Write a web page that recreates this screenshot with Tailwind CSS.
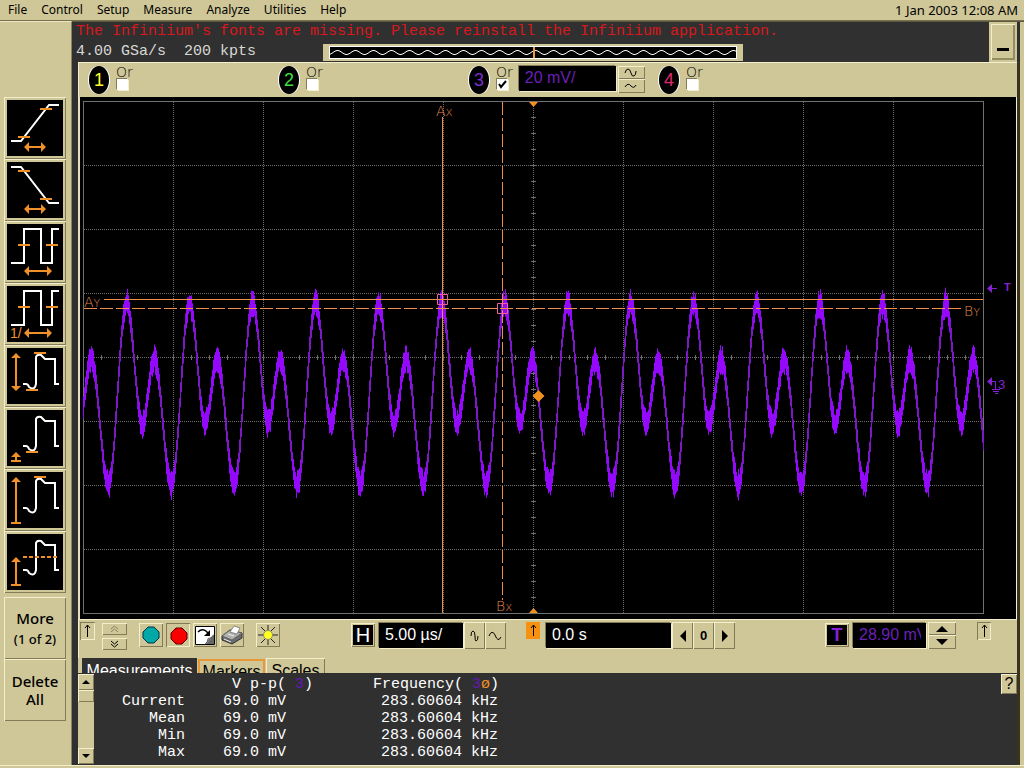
<!DOCTYPE html>
<html lang="en">
<head>
<meta charset="utf-8">
<title>Infiniium</title>
<script src="https://cdn.jsdelivr.net/npm/@tailwindcss/browser@4"></script>
</head>
<body class="min-h-screen flex flex-col bg-[#cfc798] font-['Liberation_Sans',sans-serif] text-black">
<svg class="hidden" aria-hidden="true">
  <defs>
    <g id="ar-h-short" fill="#f09028"><path d="M17 47l5-5v10zM39 47l-5-5v10zM22 46h12v2H22z"/></g>
    <g id="ar-h-long" fill="#f09028"><path d="M17 47l5-5v10zM45 47l-5-5v10zM22 46h18v2H22z"/></g>
    <g id="square-wave" fill="none" stroke-width="2"><path stroke="#fff" d="M4 39h13V5h17v34h11V5h7"/><path stroke="#f09028" d="M11 21h12M39 21h12"/></g>
    <path id="pulse" fill="none" stroke="#fff" stroke-width="2" d="M16 36h3q2 0 3 3q4 3 6 0l1-3V9q1-3 5-2l4 4h10v25h4"/>
  </defs>
</svg>

<nav class="h-[21px] shrink-0 flex items-center pl-2 pr-1.5 gap-[14px] text-[12px] leading-5 font-['Noto_Sans',sans-serif] border-b border-[#77714f]" aria-label="Main menu">
  <button>File</button><button>Control</button><button>Setup</button><button>Measure</button><button>Analyze</button><button>Utilities</button><button>Help</button>
  <time class="ml-auto text-[13px]">1 Jan 2003 12:08 AM</time>
</nav>

<div class="flex-1 flex">
  <aside class="w-[72px] shrink-0 pt-[75px] pl-1 border-t border-r border-t-[#eee8c0] border-r-[#8a8360] flex flex-col items-start">
    <button aria-label="Rise time" class="w-[62px] h-[62px] p-[3px] shadow-[inset_1px_1px_0_#f3eecb,inset_-1px_-1px_0_#827b56]"><svg viewBox="0 0 56 56" class="bg-black w-full"><path fill="none" stroke="#fff" stroke-width="2" d="M4 41h10L42 5h10"/><path stroke="#f09028" stroke-width="2" d="M11 37h12M33 9h12"/><use href="#ar-h-short"/></svg></button>
    <button aria-label="Fall time" class="w-[62px] h-[62px] p-[3px] shadow-[inset_1px_1px_0_#f3eecb,inset_-1px_-1px_0_#827b56]"><svg viewBox="0 0 56 56" class="bg-black w-full"><path fill="none" stroke="#fff" stroke-width="2" d="M4 5h10L42 41h10"/><path stroke="#f09028" stroke-width="2" d="M11 9h12M33 37h12"/><use href="#ar-h-short"/></svg></button>
    <button aria-label="Period" class="w-[62px] h-[62px] p-[3px] shadow-[inset_1px_1px_0_#f3eecb,inset_-1px_-1px_0_#827b56]"><svg viewBox="0 0 56 56" class="bg-black w-full"><use href="#square-wave"/><use href="#ar-h-long"/></svg></button>
    <button aria-label="Frequency" class="w-[62px] h-[62px] p-[3px] shadow-[inset_1px_1px_0_#f3eecb,inset_-1px_-1px_0_#827b56]"><svg viewBox="0 0 56 56" class="bg-black w-full"><use href="#square-wave"/><use href="#ar-h-long"/><text x="3" y="52" font-size="14" fill="#f09028">1/</text></svg></button>
    <button aria-label="V peak-peak" class="w-[62px] h-[62px] p-[3px] shadow-[inset_1px_1px_0_#f3eecb,inset_-1px_-1px_0_#827b56]"><svg viewBox="0 0 56 56" class="bg-black w-full"><use href="#pulse"/><path fill="#f09028" d="M27 4h12v2H27zM19 41h12v2H19zM9 5l5 5H4zM9 43l5-5H4zM8 10h2v28H8z"/></svg></button>
    <button aria-label="V min" class="w-[62px] h-[62px] p-[3px] shadow-[inset_1px_1px_0_#f3eecb,inset_-1px_-1px_0_#827b56]"><svg viewBox="0 0 56 56" class="bg-black w-full"><use href="#pulse"/><path fill="#f09028" d="M19 41h12v2H19zM9 42l5 5H4zM8 47h2v3H8zM4 50h10v2H4z"/></svg></button>
    <button aria-label="V max" class="w-[62px] h-[62px] p-[3px] shadow-[inset_1px_1px_0_#f3eecb,inset_-1px_-1px_0_#827b56]"><svg viewBox="0 0 56 56" class="bg-black w-full"><use href="#pulse"/><path fill="#f09028" d="M27 4h12v2H27zM9 5l5 5H4zM8 10h2v40H8zM4 50h10v2H4z"/></svg></button>
    <button aria-label="V average" class="w-[62px] h-[62px] p-[3px] shadow-[inset_1px_1px_0_#f3eecb,inset_-1px_-1px_0_#827b56]"><svg viewBox="0 0 56 56" class="bg-black w-full"><use href="#pulse"/><path fill="#f09028" d="M9 23l5 5H4zM8 28h2v22H8zM4 50h10v2H4z"/><path stroke="#f09028" stroke-width="2" stroke-dasharray="4 2" d="M16 23h35"/></svg></button>
    <button class="mt-1 w-[62px] h-[62px] text-[15px] leading-5 font-medium font-['Noto_Sans',sans-serif] shadow-[inset_1px_1px_0_#f3eecb,inset_-1px_-1px_0_#827b56]">More<br><span class="text-[13px]">(1 of 2)</span></button>
    <button class="w-[62px] h-[62px] text-[15px] leading-[18px] font-medium font-['Noto_Sans',sans-serif] shadow-[inset_1px_1px_0_#f3eecb,inset_-1px_-1px_0_#827b56]">Delete<br>All</button>
  </aside>

  <main class="flex-1 min-w-0 pl-1 flex flex-col bg-[#303030] border-t border-t-[#5e5a42]">
    <header class="h-[40px] shrink-0 flex">
      <div class="flex-1 min-w-0 font-['Liberation_Mono',monospace] text-[15px]">
        <p class="h-[22px] leading-[20px] whitespace-pre text-[#d8181c]">The Infiniium's fonts are missing. Please reinstall the Infiniium application.</p>
        <div class="flex text-[#d8d8d4]">
          <p class="w-[247px] leading-[15px] whitespace-pre">4.00 GSa/s  200 kpts</p>
          <div class="w-[420px] h-[17px] bg-[#cfc798] px-1.5 py-0.5">
            <svg class="w-full h-[13px] bg-black outline-1 -outline-offset-1 outline-white" viewBox="0 0 408 13" aria-label="Memory bar"><path id="memwave" fill="none" stroke="#fff"/><path stroke="#f09838" stroke-width="2" d="M205 0v13"/></svg>
          </div>
        </div>
      </div>
      <div class="w-[28px] mr-[3px] bg-[#cfc798] p-0.5"><button aria-label="Minimize" class="w-full h-full flex items-end justify-center pb-[9px] shadow-[inset_1px_1px_0_#f3eecb,inset_-2px_-2px_0_#948d62]"><span class="w-3 h-[3px] bg-black"></span></button></div>
      <div class="w-1 bg-[#cfc798]"></div>
    </header>

    <div class="flex-1 flex flex-col ml-0.5 border-r-4 border-[#cfc798]">
      <div class="flex-1 flex flex-col border-r-[3px] border-[#38321e]">
        <section aria-label="Channels" class="h-[35px] shrink-0 bg-[#cfc798] border-t border-t-[#f3eecb] border-l border-l-[#f3eecb] pl-[10px] flex items-start pt-[3px]">
          <div class="w-[190px] flex items-start">
            <button class="w-[20px] h-[28px] rounded-[50%] bg-black text-[#ffff30] text-[18px] leading-7 shadow-[-1px_0_0_#fff,1px_0_0_#fff]">1</button>
            <label class="ml-[7px] flex flex-col text-[14px] leading-[13px] font-['DejaVu_Sans',sans-serif] font-extralight">Or<input type="checkbox" class="appearance-none w-[11px] h-[11px] bg-white shadow-[-1px_-1px_0_#827b56,1px_1px_0_#f3eecb] ml-px"></label>
          </div>
          <div class="w-[190px] flex items-start">
            <button class="w-[20px] h-[28px] rounded-[50%] bg-black text-[#40e040] text-[18px] leading-7 shadow-[-1px_0_0_#fff,1px_0_0_#fff]">2</button>
            <label class="ml-[7px] flex flex-col text-[14px] leading-[13px] font-['DejaVu_Sans',sans-serif] font-extralight">Or<input type="checkbox" class="appearance-none w-[11px] h-[11px] bg-white shadow-[-1px_-1px_0_#827b56,1px_1px_0_#f3eecb] ml-px"></label>
          </div>
          <div class="w-[190px] flex items-start">
            <button class="w-[20px] h-[28px] rounded-[50%] bg-black text-[#7a2cd0] text-[18px] leading-7 shadow-[-1px_0_0_#fff,1px_0_0_#fff]">3</button>
            <label class="ml-[7px] flex flex-col text-[14px] leading-[13px] font-['DejaVu_Sans',sans-serif] font-extralight">Or<span class="relative ml-px h-[11px] w-[11px]"><input type="checkbox" checked class="block appearance-none w-[11px] h-[11px] bg-white shadow-[-1px_-1px_0_#827b56,1px_1px_0_#f3eecb]"><svg class="absolute inset-0 pointer-events-none" viewBox="0 0 11 11"><path d="M2 5l2 3 5-6" fill="none" stroke="#000" stroke-width="2"/></svg></span></label>
            <input aria-label="Channel 3 scale" value="20 mV/" class="ml-[6px] w-[97px] h-[25px] px-1.5 pb-0.5 bg-black text-[16px] text-[#6a20b8] shadow-[-1px_-1px_0_#827b56,1px_1px_0_#f3eecb]">
            <div class="ml-0.5 w-[27px] shrink-0 flex flex-col">
              <button aria-label="Increase scale" class="h-[13px] flex justify-center shadow-[inset_1px_1px_0_#f3eecb,inset_-1px_-1px_0_#827b56]"><svg width="16" height="13"><path d="M2 7q1-4 3-4q2 0 3 4t3 3q2-1 2-5" fill="none" stroke="#000"/></svg></button>
              <button aria-label="Decrease scale" class="h-[14px] flex justify-center shadow-[inset_1px_1px_0_#f3eecb,inset_-1px_-1px_0_#827b56]"><svg width="16" height="13"><path d="M2 8q3-5 6-1q3 3 5-1" fill="none" stroke="#000"/></svg></button>
            </div>
          </div>
          <div class="flex items-start">
            <button class="w-[20px] h-[28px] rounded-[50%] bg-black text-[#e02870] text-[18px] leading-7 shadow-[-1px_0_0_#fff,1px_0_0_#fff]">4</button>
            <label class="ml-[7px] flex flex-col text-[14px] leading-[13px] font-['DejaVu_Sans',sans-serif] font-extralight">Or<input type="checkbox" class="appearance-none w-[11px] h-[11px] bg-white shadow-[-1px_-1px_0_#827b56,1px_1px_0_#f3eecb] ml-px"></label>
          </div>
        </section>

        <div class="border-l-2 border-l-[#e6e0c0] border-r border-r-[#f3eecb]">
        <svg class="block w-full bg-black" viewBox="80 97 936 522" role="img" aria-label="Waveform display">
          <g id="grid" fill="none" stroke="#6c6c68"></g>
          <rect x="83.5" y="101.5" width="900" height="512" fill="none" stroke="#70706c"/>
          <path id="trace-edges" fill="none" stroke="#7c18c4" stroke-width="1"/>
          <path id="trace" fill="none" stroke="#9408fc" stroke-width="1"/>
          <g fill="none" stroke="#ee8e48">
            <path d="M104 299.5H983"/>
            <path d="M84 308.5H962" stroke-dasharray="13 3"/>
            <path d="M442.5 117V613"/>
            <path d="M502.5 102V600" stroke-dasharray="13 3"/>
          </g>
          <g fill="none" stroke="#f060a0"><path d="M437.5 294.5h10v10h-10zM497.5 303.5h10v10h-10z"/></g>
          <path fill="#f09020" d="M529 102h9l-4.500 5zM529 613h9l-4.500-5zM538.500 390l6 6-6 6-6-6z"/>
          <g fill="#e08848" font-family="DejaVu Sans" font-weight="200" font-size="14">
            <text x="436" y="116">A<tspan font-size="12">x</tspan></text>
            <text x="496" y="611">B<tspan font-size="12">x</tspan></text>
            <text x="84" y="307">A<tspan font-size="11">Y</tspan></text>
            <text x="964" y="316">B<tspan font-size="11">Y</tspan></text>
          </g>
          <g fill="#8420d0" font-size="13">
            <path d="M987 288.500l5-4.500v9zM992 288h5v1h-5zM987 381.500l5-4.500v9zM992 381h4v8h-1v-7h-3z"/>
            <path d="M992 389.500h8M993 391.500h6M995 393.500h3" stroke="#8420d0"/>
            <text x="1004" y="291" font-size="11" font-weight="bold">T</text><text x="998" y="389">3</text>
          </g>
        </svg>
        </div>

        <section aria-label="Horizontal and trigger controls" class="h-[39px] shrink-0 bg-[#cfc798] border-t border-t-[#f3eecb] border-l border-l-[#f3eecb] pl-px flex items-start pt-0.5">
          <button aria-label="Trigger position left" class="w-[15px] h-[18px] shadow-[inset_1px_1px_0_#827b56,inset_-1px_-1px_0_#f3eecb]"><svg width="15" height="18"><path d="M7.500 3v12M5 6l2.500-3L10 6" fill="none" stroke="#000"/></svg></button>
          <div class="ml-[7px] w-[25px] flex flex-col gap-[3px] pt-px">
            <button aria-label="Move up" class="h-3 flex justify-center shadow-[inset_1px_1px_0_#f3eecb,inset_-1px_-1px_0_#827b56]"><svg width="9" height="12"><path d="M1 6l3.500-3L8 6M1 9l3.500-3L8 9" fill="none" stroke="#8a8360"/></svg></button>
            <button aria-label="Move down" class="h-3 flex justify-center shadow-[inset_1px_1px_0_#f3eecb,inset_-1px_-1px_0_#827b56]"><svg width="9" height="12"><path d="M1 3l3.500 3L8 3M1 6l3.500 3L8 6" fill="none" stroke="#000"/></svg></button>
          </div>
          <div class="ml-3 mt-px flex gap-[3px]">
            <button aria-label="Run" class="w-6 h-6 shadow-[inset_1px_1px_0_#f3eecb,inset_-1px_-1px_0_#827b56]"><svg viewBox="0 0 24 24"><path d="M9 4h6l5 5v6l-5 5H9l-5-5V9z" fill="#00a8a8" stroke="#034"/></svg></button>
            <button aria-label="Stop" class="w-6 h-6 shadow-[inset_1px_1px_0_#827b56,inset_-1px_-1px_0_#f3eecb]"><svg viewBox="0 0 24 24"><path d="M10 5h6l5 5v6l-5 5h-6l-5-5v-6z" fill="#f80000" stroke="#500"/></svg></button>
            <button aria-label="Clear display" class="w-6 h-6 shadow-[inset_1px_1px_0_#f3eecb,inset_-1px_-1px_0_#827b56]"><svg viewBox="0 0 24 24"><path d="M2.500 3.500h19v18h-19z" fill="#fff" stroke="#000"/><path d="M21 12v9h-8z" fill="#666"/><path d="M12 21.500q3-3 3-6q4 0 6-4z" fill="#999" stroke="#444" stroke-width=".7"/><path d="M5 9q5-5 10 1" fill="none" stroke="#000" stroke-width="1.500"/><path d="M17 7v6h-6z"/></svg></button>
            <button aria-label="Print" class="w-6 h-6 shadow-[inset_1px_1px_0_#f3eecb,inset_-1px_-1px_0_#827b56]"><svg viewBox="0 0 24 24"><path d="M2 13l8-6 12 3v5l-10 6-10-4z" fill="#6c6c6c" stroke="#333"/><path d="M2 13l8-6 12 3-10 7z" fill="#b0b0b0" stroke="#555" stroke-width=".7"/><path d="M10 9l4-6 6 2-3 6z" fill="#fff" stroke="#666" stroke-width=".7"/><path d="M4 16l7 3M8 11l6 2" stroke="#eee"/></svg></button>
          </div>
          <button aria-label="Brightness" class="ml-3 mt-px w-6 h-6 shadow-[inset_1px_1px_0_#f3eecb,inset_-1px_-1px_0_#827b56]"><svg viewBox="0 0 24 24"><path d="M12 2v5M12 17v5M2 12h5M17 12h5M5 4l4 4M19 4l-4 4M5 20l4-4M19 20l-4-4" stroke="#222"/><circle cx="12" cy="12" r="4.500" fill="#ffff20" stroke="#886"/></svg></button>
          <button aria-label="Horizontal" class="ml-[71px] mt-px w-6 h-6 p-0.5 shadow-[inset_1px_1px_0_#f3eecb,inset_-1px_-1px_0_#827b56]"><span class="block bg-black text-white text-[20px] leading-5">H</span></button>
          <input aria-label="Time per division" value="5.00 µs/" class="ml-1 w-[84px] h-[25px] mt-px px-1.5 pb-0.5 bg-black text-[16px] text-white shadow-[-1px_-1px_0_#827b56,1px_1px_0_#f3eecb]">
          <div class="ml-px flex">
            <button aria-label="Zoom in time" class="w-[21px] h-[27px] flex justify-center items-center shadow-[inset_1px_1px_0_#f3eecb,inset_-1px_-1px_0_#827b56]"><svg width="9" height="14"><path d="M1 7q0-5 2-5t2 5q0 5 1 5q2 0 2-5" fill="none" stroke="#000"/></svg></button>
            <button aria-label="Zoom out time" class="w-[21px] h-[27px] flex justify-center items-center shadow-[inset_1px_1px_0_#f3eecb,inset_-1px_-1px_0_#827b56]"><svg width="15" height="14"><path d="M1 7q3-7 6-1q3 8 6 2" fill="none" stroke="#000"/></svg></button>
          </div>
          <button aria-label="Trigger position" class="ml-5 w-[14px] h-[17px] bg-[#f89010]"><svg width="14" height="17"><path d="M7.500 3v11M5 6l2.500-3L10 6" fill="none" stroke="#000"/></svg></button>
          <input aria-label="Horizontal position" value="0.0 s" class="ml-[6px] w-[125px] h-[25px] mt-px px-1.5 pb-0.5 bg-black text-[16px] text-white shadow-[-1px_-1px_0_#827b56,1px_1px_0_#f3eecb]">
          <div class="ml-px flex">
            <button aria-label="Position left" class="w-[21px] h-[27px] flex justify-center items-center shadow-[inset_1px_1px_0_#f3eecb,inset_-1px_-1px_0_#827b56]"><svg width="6" height="12"><path d="M6 0v12L0 6z"/></svg></button>
            <button class="w-[21px] h-[27px] text-[13px] font-bold shadow-[inset_1px_1px_0_#f3eecb,inset_-1px_-1px_0_#827b56]">0</button>
            <button aria-label="Position right" class="w-[21px] h-[27px] flex justify-center items-center shadow-[inset_1px_1px_0_#f3eecb,inset_-1px_-1px_0_#827b56]"><svg width="6" height="12"><path d="M0 0v12l6-6z"/></svg></button>
          </div>
          <button aria-label="Trigger" class="ml-auto mt-px w-6 h-6 p-0.5 shadow-[inset_1px_1px_0_#f3eecb,inset_-1px_-1px_0_#827b56]"><span class="block bg-black text-[#8820d8] text-[18px] font-bold leading-5">T</span></button>
          <input aria-label="Trigger level" value="28.90 mV" class="ml-1 w-[73px] h-[25px] mt-px pl-1.5 pr-[5px] pb-0.5 bg-black text-[16px] text-[#6a20b8] shadow-[-1px_-1px_0_#827b56,1px_1px_0_#f3eecb]">
          <div class="ml-0.5 w-[28px] flex flex-col">
            <button aria-label="Trigger level up" class="h-[13px] flex justify-center items-center shadow-[inset_1px_1px_0_#f3eecb,inset_-1px_-1px_0_#827b56]"><svg width="12" height="6"><path d="M6 0l6 6H0z"/></svg></button>
            <button aria-label="Trigger level down" class="h-[14px] flex justify-center items-center shadow-[inset_1px_1px_0_#f3eecb,inset_-1px_-1px_0_#827b56]"><svg width="12" height="6"><path d="M6 6l6-6H0z"/></svg></button>
          </div>
          <button aria-label="Trigger position right" class="ml-[21px] mr-[26px] w-[14px] h-[18px] shadow-[inset_1px_1px_0_#827b56,inset_-1px_-1px_0_#f3eecb]"><svg width="14" height="18"><path d="M7.500 3v12M5 6l2.500-3L10 6" fill="none" stroke="#000"/></svg></button>
        </section>

        <div role="tablist" class="h-[15px] shrink-0 overflow-hidden bg-[#cfc798] pl-1 flex items-start text-[16px] leading-6">
          <button role="tab" aria-selected="true" class="w-[115px] h-[26px] bg-[#303030] text-white">Measurements</button>
          <button role="tab" class="ml-px w-[67px] h-[26px] mt-px border-2 border-[#e89838] leading-[18px]">Markers</button>
          <button role="tab" class="ml-px w-[59px] h-[26px] shadow-[inset_1px_1px_0_#f3eecb,inset_-1px_0_0_#827b56]">Scales</button>
        </div>

        <section aria-label="Measurement results" class="flex-1 flex items-start text-white pt-px">
          <div class="w-4 h-[90px] bg-[#cfc798] flex flex-col">
            <button aria-label="Scroll up" class="h-4 flex justify-center items-center shadow-[inset_1px_1px_0_#f3eecb,inset_-1px_-1px_0_#827b56]"><svg width="8" height="4"><path d="M4 0l4 4H0z"/></svg></button>
            <div class="h-3 shadow-[inset_1px_1px_0_#f3eecb,inset_-1px_-1px_0_#827b56]"></div>
            <button aria-label="Scroll down" class="mt-auto h-4 flex justify-center items-center shadow-[inset_1px_1px_0_#f3eecb,inset_-1px_-1px_0_#827b56]"><svg width="8" height="4"><path d="M4 4l4-4H0z"/></svg></button>
          </div>
          <table class="mt-0.5 font-['Liberation_Mono',monospace] text-[15px] leading-[17px] text-right whitespace-pre">
            <thead><tr><td class="w-[91px]"></td><th class="w-[128px] font-normal" scope="col">V p-p( <span class="text-[#6418b8]">3</span>)</th><th class="w-[186px] font-normal" scope="col">Frequency( <span class="text-[#6418b8]">3</span><span class="text-[#f09028]">ø</span>)</th></tr></thead>
            <tbody>
              <tr><th class="font-normal" scope="row">Current</th><td class="pr-[27px]">69.0 mV</td><td class="pr-px">283.60604 kHz</td></tr>
              <tr><th class="font-normal" scope="row">Mean</th><td class="pr-[27px]">69.0 mV</td><td class="pr-px">283.60604 kHz</td></tr>
              <tr><th class="font-normal" scope="row">Min</th><td class="pr-[27px]">69.0 mV</td><td class="pr-px">283.60604 kHz</td></tr>
              <tr><th class="font-normal" scope="row">Max</th><td class="pr-[27px]">69.0 mV</td><td class="pr-px">283.60604 kHz</td></tr>
            </tbody>
          </table>
          <button aria-label="Help" class="ml-auto w-4 h-5 bg-[#cfc798] text-black text-[16px] leading-5 shadow-[inset_1px_1px_0_#f3eecb,inset_-1px_-1px_0_#827b56]">?</button>
        </section>
      </div>
    </div>
  </main>
</div>
<footer class="h-[3px] shrink-0 border-t border-[#f3eecb]"></footer>

<script>
  // Graticule: 10 x 8 divisions of dotted lines, with minor ticks on both axes.
  let g = '';
  for (let i = 1; i < 10; i++) g += `<path stroke-dasharray="1 1" d="M${83.5 + i * 90} 102V613"/>`;
  for (let j = 1; j < 8; j++) g += `<path stroke-dasharray="1 1" d="M84 ${101.5 + j * 64}H983"/>`;
  let ticks = '';
  for (let x = 101.5; x < 983; x += 18) ticks += `M${x} 355v5`;
  for (let y = 101.5 + 16; y < 613; y += 16) ticks += `M531 ${y}h5`;
  document.getElementById('grid').innerHTML = g + `<path d="${ticks}"/>`;

  // Memory bar wave
  let m = '';
  for (let x = 0; x <= 408; x++) m += (x ? 'L' : 'M') + x + ' ' + (6.5 - 2 * Math.sin((x - 4) / 18 * 2 * Math.PI)).toFixed(1);
  document.getElementById('memwave').setAttribute('d', m);

  // Channel 3 trace: extrema of one period joined by half cosines, with a noise
  // band that is widest around the peaks; the steep flanks are thinner and dimmer.
  const keys = [[0, 303], [15.5, 424], [27.5, 359], [44.7, 485], [63, 303]];
  const wave = x => {
    const t = (((x - 126.7) % 63) + 63) % 63;
    let k = 0;
    while (t >= keys[k + 1][0]) k++;
    const [x0, y0] = keys[k], [x1, y1] = keys[k + 1];
    return y0 + (y1 - y0) * (1 - Math.cos(Math.PI * (t - x0) / (x1 - x0))) / 2;
  };
  let seed = 7;
  const rnd = () => (seed = (seed * 16807) % 2147483647) / 2147483647;
  let bright = '', dim = '';
  for (let x = 83.5; x <= 983.5; x++) {
    const ys = [wave(x - 0.5), wave(x), wave(x + 0.5)];
    const top = Math.min(...ys), bottom = Math.max(...ys);
    const flat = Math.max(0, 1 - (bottom - top) / 11);
    const noise = () => 4 + 3 * flat + (3 + 6 * flat) * rnd();
    const seg = `M${x} ${(top - noise()).toFixed(1)}V${(bottom + noise()).toFixed(1)}`;
    if (flat > 0.15) bright += seg; else dim += seg;
  }
  document.getElementById('trace').setAttribute('d', bright);
  document.getElementById('trace-edges').setAttribute('d', dim);
</script>
</body>
</html>
